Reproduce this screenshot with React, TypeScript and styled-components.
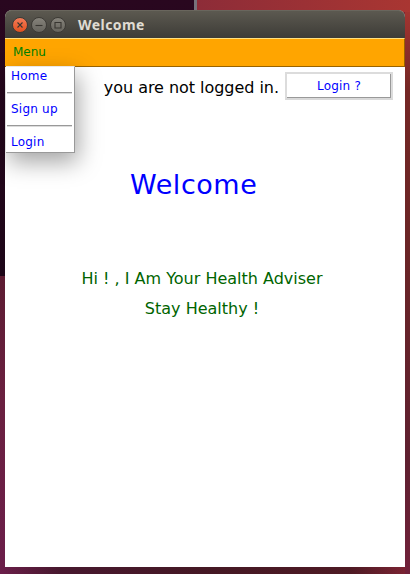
import React from "react";
import styled, { createGlobalStyle } from "styled-components";

const GlobalStyle = createGlobalStyle`
  * { box-sizing: border-box; }
  html, body { margin: 0; padding: 0; }
  body { font-family: "DejaVu Sans", sans-serif; overflow: hidden; }
`;

const Desktop = styled.div`
  width: 410px;
  height: 574px;
  padding: 10px 5px 7px;
  background:
    linear-gradient(#29071f, #1d0618) 0 0 / 194px 276px no-repeat,
    linear-gradient(#77727b, #77727b) 194px 0 / 3px 10px no-repeat,
    linear-gradient(90deg, #8d2c38, #a93632) 197px 0 / 213px 12px no-repeat,
    linear-gradient(90deg, transparent, rgba(20, 15, 15, 0.4) 60px, rgba(20, 15, 15, 0.4) 350px, transparent 405px) 0 567px / 410px 7px no-repeat,
    linear-gradient(#a93632, #742725 90px, #6b2526 240px, #5f2030 460px, #71213a) 405px 0 / 5px 574px no-repeat,
    linear-gradient(#5d1c32 276px, #6a2040 400px, #6b1e4a) 0 0 / 5px 574px no-repeat,
    linear-gradient(90deg, #6b1e4a, #651e32 50%, #7b2332);
`;

const Window = styled.div`
  display: flex;
  flex-direction: column;
  height: 557px;
  background: #fff;
  border-radius: 7px 7px 0 0;
`;

const TitleBar = styled.header`
  display: flex;
  align-items: center;
  gap: 3px;
  height: 28px;
  padding: 1px 7px 0;
  border-radius: 7px 7px 0 0;
  background: linear-gradient(#5d5a51, #3d3c37);
  box-shadow: inset 0 1px #69665d;
`;

const Control = styled.button<{ $close?: boolean }>`
  display: flex;
  width: 16px;
  height: 16px;
  padding: 0;
  border: 1px solid #3d3b36;
  border-radius: 50%;
  color: #383631;
  background: ${(p) => (p.$close ? "linear-gradient(#f37b58, #e2511f)" : "linear-gradient(#85827a, #66645d)")};
`;

const Title = styled.span`
  margin-left: 9px;
  color: #dfdbd2;
  font: bold 14px/20px "Noto Sans", sans-serif;
  letter-spacing: 0.45px;
`;

const MenuBar = styled.nav`
  position: relative;
  height: 29px;
  padding: 6px 0 0 8px;
  background: #ffa500;
  border: solid;
  border-width: 1px 1px 1px 0;
  border-color: #ffe080 #996300 #996300;
  color: #008000;
  font-size: 12px;
  line-height: 14px;
`;

const Popup = styled.div`
  position: absolute;
  top: 27px;
  left: 1px;
  width: 69px;
  height: 87px;
  padding: 0 2px 0 1px;
  background: #fff;
  border: solid;
  border-width: 1px 1px 1px 0;
  border-color: #e8e8e8 #999 #999;
  box-shadow: 3px 9px 22px rgba(0, 0, 0, 0.36);
  color: #0000ff;
  letter-spacing: 0.22px;
`;

const MenuItem = styled.div`
  height: 25px;
  padding: 2px 0 0 4px;
`;

const Separator = styled.div`
  height: 2px;
  margin-bottom: 6px;
  border-top: 1px solid #999;
  border-bottom: 1px solid #dcdcdc;
`;

const Status = styled.div`
  display: flex;
  justify-content: flex-end;
  gap: 6px;
  padding: 5px 12px 0 0;
  font-size: 16px;
  line-height: 31px;
  letter-spacing: -0.04px;
`;

const LoginButton = styled.button`
  width: 108px;
  height: 28px;
  padding: 0;
  background: #fff;
  border: 2px solid;
  border-color: #dcdcdc #dcdcdc #d9d9d9 #dcdcdc;
  box-shadow: inset -1px -1px #999;
  color: #0000ff;
  font: 12px/14px "DejaVu Sans", sans-serif;
  letter-spacing: 0.22px;
`;

const Heading = styled.h1`
  margin: 64px 0 0 125px;
  color: #0000ff;
  font-weight: normal;
  font-size: 27px;
  line-height: 36px;
  letter-spacing: 0.55px;
`;

const Message = styled.p`
  margin: 61px 0 0;
  padding-right: 6px;
  color: #006400;
  font-size: 16px;
  line-height: 30px;
  text-align: center;
`;

const icons = {
  close: "M4.5 4.5l5 5m0-5l-5 5",
  minimize: "M3.5 7.5h7",
  maximize: "M4 4.5h6v5.5h-6z",
};

const ControlIcon = ({ name }: { name: keyof typeof icons }) => (
  <svg width="14" height="14" viewBox="0 0 14 14" fill="none" stroke="currentColor" strokeWidth="1.1">
    <path d={icons[name]} />
  </svg>
);

export default function App() {
  return (
    <>
      <GlobalStyle />
      <Desktop>
        <Window>
          <TitleBar>
            <Control $close aria-label="Close"><ControlIcon name="close" /></Control>
            <Control aria-label="Minimize"><ControlIcon name="minimize" /></Control>
            <Control aria-label="Maximize"><ControlIcon name="maximize" /></Control>
            <Title>Welcome</Title>
          </TitleBar>
          <MenuBar>
            Menu
            <Popup>
              <MenuItem>Home</MenuItem>
              <Separator />
              <MenuItem>Sign up</MenuItem>
              <Separator />
              <MenuItem>Login</MenuItem>
            </Popup>
          </MenuBar>
          <Status>
            <span>you are not logged in.</span>
            <LoginButton>Login ?</LoginButton>
          </Status>
          <Heading>Welcome</Heading>
          <Message>
            Hi ! , I Am Your Health Adviser
            <br />
            Stay Healthy !
          </Message>
        </Window>
      </Desktop>
    </>
  );
}
